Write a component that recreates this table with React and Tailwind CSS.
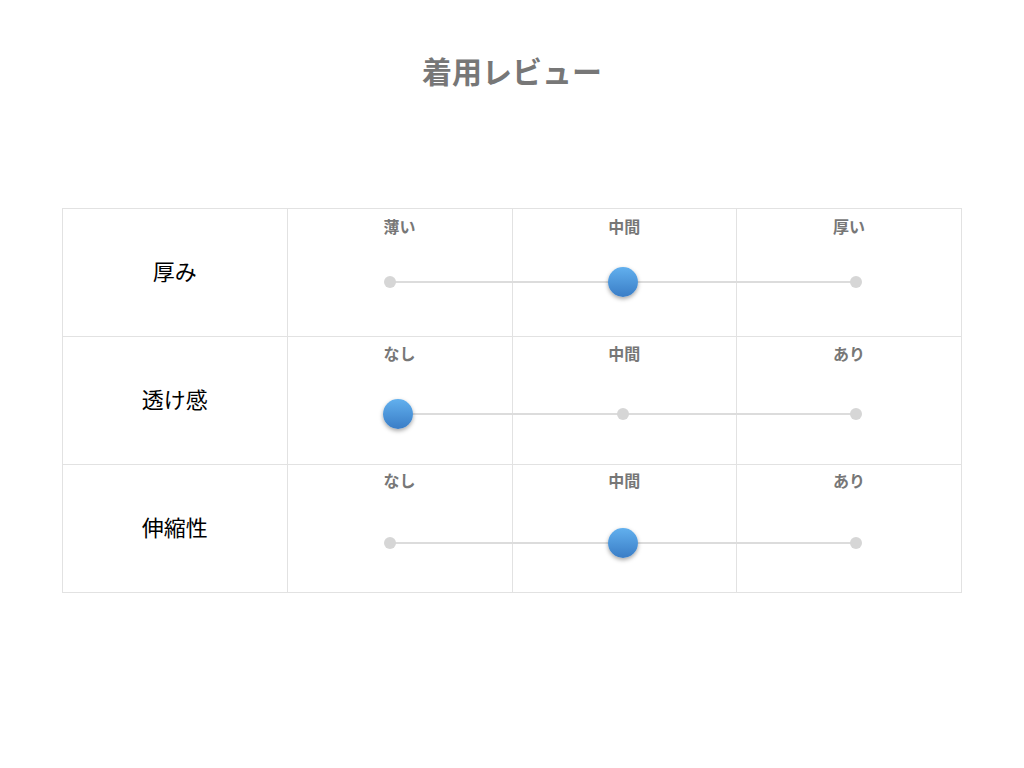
import React from 'react';

const rows = [
  { label: '厚み', marks: ['薄い', '中間', '厚い'], value: 1, top: 'pt-[5px]', line: 'top-[73px]' },
  { label: '透け感', marks: ['なし', '中間', 'あり'], value: 0, top: 'pt-[4px]', line: 'top-[77px]' },
  { label: '伸縮性', marks: ['なし', '中間', 'あり'], value: 1, top: 'pt-[3px]', line: 'top-[78px]' },
];

function Knob({ shift }) {
  return (
    <div
      className={`shrink-0 w-[30px] h-[30px] rounded-full bg-gradient-to-b from-[#62b0ee] to-[#3a7dc6] shadow-[0_2px_4px_rgba(0,0,0,0.35)] ${shift ? 'translate-x-[8px]' : ''}`}
    />
  );
}

function Dot() {
  return <div className="shrink-0 w-[12px] h-[12px] rounded-full bg-[#d6d6d6]" />;
}

function Slider({ value, line }) {
  return (
    <div className={`absolute left-[96px] w-[478px] -translate-y-1/2 ${line}`}>
      <div className="absolute left-[6px] right-[6px] top-1/2 -mt-px h-[2px] bg-[#dcdcdc]" />
      <div className="relative flex items-center justify-between h-[30px]">
        {[0, 1, 2].map((i) => (
          <div key={i} className="w-[12px] flex justify-center">
            {value === i ? <Knob shift={i === 0} /> : <Dot />}
          </div>
        ))}
      </div>
    </div>
  );
}

export default function App() {
  return (
    <div
      className="w-[1024px] h-[768px] bg-white"
      style={{ fontFamily: '"Noto Sans CJK JP", "Noto Sans", sans-serif' }}
    >
      <h1 className="pt-[47px] text-center text-[30px] leading-[46px] font-bold text-[#777777]">
        着用レビュー
      </h1>

      <div className="mx-[62px] mt-[115px] border-t border-l border-[#e2e2e2]">
        {rows.map((row) => (
          <div key={row.label} className="grid grid-cols-4 h-[128px]">
            <div className="flex items-center justify-center pb-[5px] border-r border-b border-[#e2e2e2] text-[22px] text-black">
              {row.label}
            </div>
            <div className="col-span-3 relative grid grid-cols-3">
              {row.marks.map((m, i) => (
                <div
                  key={i}
                  className={`border-r border-b border-[#e2e2e2] text-center text-[16px] leading-[24px] font-bold text-[#777777] ${row.top}`}
                >
                  {m}
                </div>
              ))}
              <Slider value={row.value} line={row.line} />
            </div>
          </div>
        ))}
      </div>
    </div>
  );
}
